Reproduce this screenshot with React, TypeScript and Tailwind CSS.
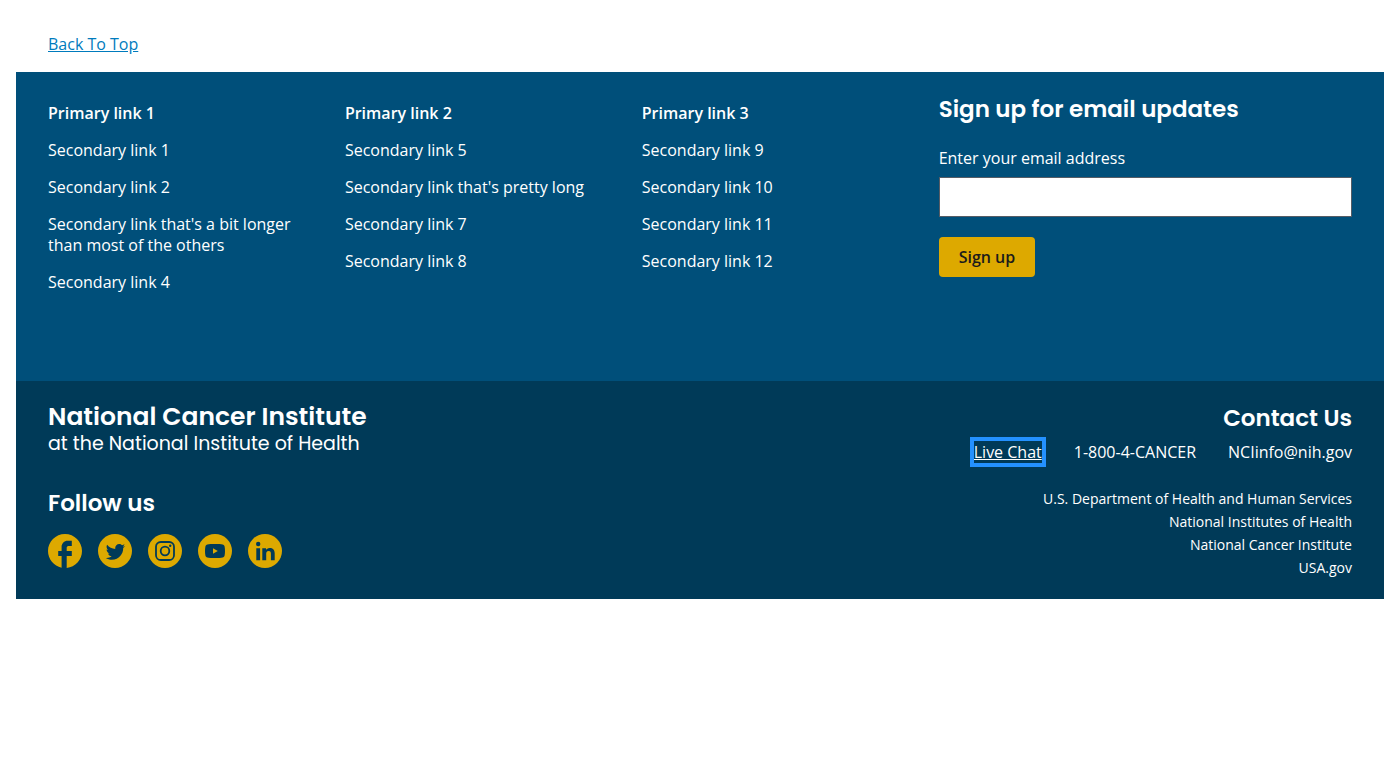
import type { ReactNode } from "react";

const linkGroups = [
  {
    title: "Primary link 1",
    links: [
      "Secondary link 1",
      "Secondary link 2",
      "Secondary link that's a bit longer than most of the others",
      "Secondary link 4",
    ],
  },
  {
    title: "Primary link 2",
    links: ["Secondary link 5", "Secondary link that's pretty long", "Secondary link 7", "Secondary link 8"],
  },
  {
    title: "Primary link 3",
    links: ["Secondary link 9", "Secondary link 10", "Secondary link 11", "Secondary link 12"],
  },
];

const agencies = [
  "U.S. Department of Health and Human Services",
  "National Institutes of Health",
  "National Cancer Institute",
  "USA.gov",
];

const heading = "font-[Poppins,Inter,sans-serif] text-[23px] leading-[34px] font-semibold";

function SocialLink({ name, children }: { name: string; children: ReactNode }) {
  return (
    <a href="#" aria-label={name} className="block">
      <svg viewBox="0 0 34 34" className="size-[34px]" aria-hidden="true">
        {children}
      </svg>
    </a>
  );
}

function Disc() {
  return <circle cx="17" cy="17" r="17" className="fill-[#dda900]" />;
}

function SocialLinks() {
  return (
    <div className="flex gap-4">
      <SocialLink name="Facebook">
        <path
          transform="translate(-3.4 -3.4) scale(1.7)"
          className="fill-[#dda900]"
          d="M22 12c0-5.52-4.48-10-10-10S2 6.48 2 12c0 4.84 3.44 8.87 8 9.8V15H8v-3h2V9.5C10 7.57 11.57 6 13.5 6H16v3h-2c-.55 0-1 .45-1 1v2h3v3h-3v6.95c5.05-.5 9-4.76 9-9.95z"
        />
      </SocialLink>
      <SocialLink name="Twitter">
        <Disc />
        <path
          transform="translate(7.8 8.2) scale(.806)"
          className="fill-[#003a58]"
          d="M23.954 4.569c-.885.389-1.83.654-2.825.775 1.014-.611 1.794-1.574 2.163-2.723-.951.555-2.005.959-3.127 1.184-.896-.959-2.173-1.559-3.591-1.559-2.717 0-4.92 2.203-4.92 4.917 0 .39.045.765.127 1.124C7.691 8.094 4.066 6.13 1.64 3.161c-.427.722-.666 1.561-.666 2.475 0 1.71.87 3.213 2.188 4.096-.807-.026-1.566-.248-2.228-.616v.061c0 2.385 1.693 4.374 3.946 4.827-.413.111-.849.171-1.296.171-.314 0-.615-.03-.916-.086.631 1.953 2.445 3.377 4.604 3.417-1.68 1.319-3.809 2.105-6.102 2.105-.39 0-.779-.023-1.17-.067 2.189 1.394 4.768 2.209 7.557 2.209 9.054 0 13.999-7.496 13.999-13.986 0-.209 0-.42-.015-.63.961-.689 1.8-1.56 2.46-2.548l-.047-.02z"
        />
      </SocialLink>
      <SocialLink name="Instagram">
        <Disc />
        <rect x="8" y="8" width="18" height="18" rx="4.8" className="fill-none stroke-[#003a58] stroke-[1.8]" />
        <circle cx="17" cy="17" r="4.3" className="fill-none stroke-[#003a58] stroke-[1.8]" />
        <circle cx="22.2" cy="11.8" r="1.2" className="fill-[#003a58]" />
      </SocialLink>
      <SocialLink name="YouTube">
        <Disc />
        <path
          className="fill-[#003a58]"
          d="M17 10c3.2 0 6.2.1 7.6.5 1.1.3 1.8 1 2 2 .3 1.3.4 2.900.4 4.500s-.1 3.200-.4 4.500c-.2 1-.9 1.700-2 2-1.400.4-4.400.5-7.600.5s-6.200-.1-7.600-.5c-1.100-.3-1.800-1-2-2C7.100 20.200 7 18.600 7 17s.1-3.200.4-4.500c.2-1 .9-1.700 2-2 1.400-.4 4.400-.5 7.600-.5z"
        />
        <path className="fill-[#dda900]" d="M15 14.200v5.600l4.800-2.800z" />
      </SocialLink>
      <SocialLink name="LinkedIn">
        <Disc />
        <path
          className="fill-[#003a58]"
          d="M8.300 14.200h3.800v12.100H8.300zM10.200 7.800a2.200 2.200 0 1 1 0 4.400 2.200 2.200 0 0 1 0-4.400zM14.300 14.200h3.700v1.700c.5-1 1.800-2 3.800-2 3.800 0 4.900 2.500 4.900 5.700v6.700h-3.800v-5.900c0-1.500 0-3.300-2.200-3.300s-2.500 1.600-2.500 3.200v6h-3.900z"
        />
      </SocialLink>
    </div>
  );
}

export default function App() {
  return (
    <div className="p-4 font-['Open_Sans',sans-serif] text-base">
      <div className="px-8 py-4 leading-6">
        <a href="#" className="text-[#007bbd] underline">
          Back To Top
        </a>
      </div>
      <footer className="text-white">
        <div className="grid grid-cols-1 gap-8 bg-[#004f7a] px-8 pt-5 pb-22 md:grid-cols-12">
          <nav aria-label="Footer navigation" className="grid grid-cols-3 gap-8 pt-[11px] leading-[21px] md:col-span-8">
            {linkGroups.map((group) => (
              <section key={group.title}>
                <h2 className="font-semibold">{group.title}</h2>
                <ul className="mt-4 flex flex-col gap-4">
                  {group.links.map((link) => (
                    <li key={link}>
                      <a href="#">{link}</a>
                    </li>
                  ))}
                </ul>
              </section>
            ))}
          </nav>
          <form className="md:col-span-4" onSubmit={(event) => event.preventDefault()}>
            <h2 className={heading}>Sign up for email updates</h2>
            <label htmlFor="email" className="mt-[22px] block leading-[21px]">
              Enter your email address
            </label>
            <input
              id="email"
              type="email"
              className="mt-2 block h-10 w-full border border-[#565c65] bg-white px-2 text-[#1b1b1b]"
            />
            <button type="submit" className="mt-5 block h-10 rounded bg-[#dda900] px-5 font-semibold text-[#1b1b1b]">
              Sign up
            </button>
          </form>
        </div>
        <div className="flex justify-between bg-[#003a58] px-8 pt-5 pb-5">
          <div>
            <p className="font-[Poppins,Inter,sans-serif] text-[25px] leading-8 font-semibold">
              National Cancer Institute
            </p>
            <p className="font-[Poppins,Inter,sans-serif] text-[19px] leading-[22px]">
              at the National Institute of Health
            </p>
            <h2 className={`${heading} mt-[31px] mb-[14px]`}>Follow us</h2>
            <SocialLinks />
          </div>
          <div className="text-right">
            <h2 className={heading}>Contact Us</h2>
            <div className="flex justify-end gap-8 leading-[34px]">
              <span>
                <a href="#" className="underline outline-4 outline-[#2491ff]">
                  Live Chat
                </a>
              </span>
              <a href="tel:1-800-4-CANCER">1-800-4-CANCER</a>
              <a href="mailto:NCIinfo@nih.gov">NCIinfo@nih.gov</a>
            </div>
            <ul className="mt-[18px] text-sm leading-[23px]">
              {agencies.map((agency) => (
                <li key={agency}>
                  <a href="#">{agency}</a>
                </li>
              ))}
            </ul>
          </div>
        </div>
      </footer>
    </div>
  );
}
